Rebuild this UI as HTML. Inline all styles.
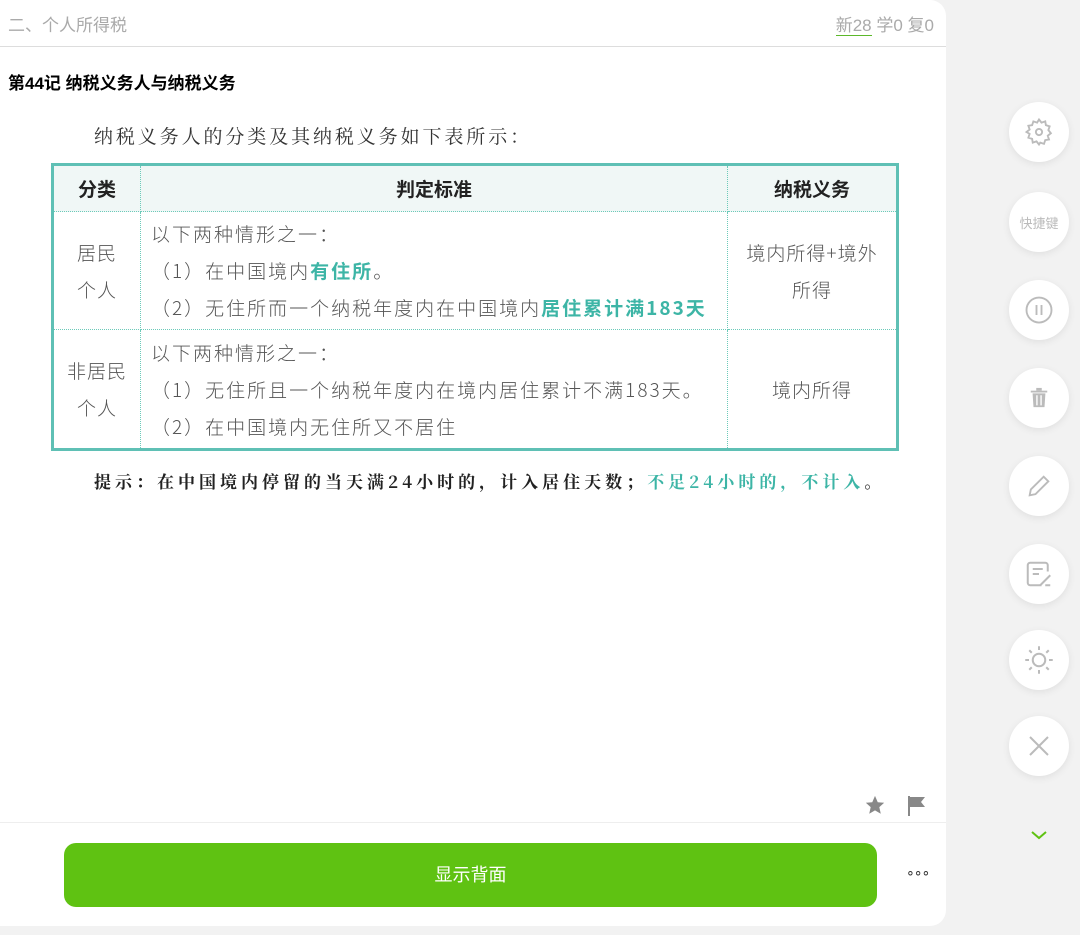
<!DOCTYPE html>
<html><head><meta charset="utf-8"><style>
body{margin:0;width:1080px;height:935px;background:#f2f2f2;font-family:"Liberation Sans","Noto Sans CJK SC",sans-serif;position:relative;overflow:hidden}
.card{position:absolute;left:0;top:0;width:946px;height:926px;background:#fff;border-radius:0 16px 16px 0}
.hdr{position:absolute;left:0;top:0;width:946px;height:46px;border-bottom:1px solid #ddd}
.hdr .l{position:absolute;left:8px;top:11px;font-size:17px;color:#aaa}
.hdr .r{position:absolute;right:12px;top:11px;font-size:17px;color:#aaa}
.hdr .r u{text-decoration:none;border-bottom:1px solid #5cb82a}
.title{position:absolute;left:8px;top:69px;font-size:17px;font-weight:bold;color:#000}
.intro{position:absolute;left:94px;top:122px;font-family:"Noto Serif CJK SC",serif;font-size:19px;color:#333;letter-spacing:2.9px}
table{position:absolute;left:51px;top:163px;width:848px;height:288px;border-collapse:collapse;border:3px solid #5fc0b5;font-family:"Noto Sans CJK SC",sans-serif;color:#555;font-size:19px;font-weight:300}
td{border:1px dotted #6ccab9;padding:0}
.th td{background:#f0f7f6;font-weight:bold;text-align:center;height:45px;color:#222}
.c1{width:86px;text-align:center;line-height:37px;letter-spacing:1px}
.c3{width:168px;text-align:center;line-height:37px;letter-spacing:1px}
.c2 div{line-height:37px;padding-left:10px;letter-spacing:2px}
.g{color:#3db5a6;font-weight:bold}
.tip{position:absolute;left:94px;top:468px;font-family:"Noto Serif CJK SC",serif;font-size:17px;color:#222;font-weight:bold;letter-spacing:4px}
.sep{position:absolute;left:0;top:822px;width:946px;border-top:1px solid #eee}
.btn{position:absolute;left:64px;top:843px;width:813px;height:64px;background:#5fc212;border-radius:12px;color:#fff;font-size:18px;text-align:center;line-height:64px}
.side{position:absolute;left:1009px;width:60px;height:60px;border-radius:50%;background:#fff;box-shadow:0 2px 8px rgba(0,0,0,.08);display:flex;align-items:center;justify-content:center}
</style></head><body>
<div class="card">
<div class="hdr"><span class="l">二、个人所得税</span><span class="r"><u>新28</u> 学0 复0</span></div>
<div class="title">第44记 纳税义务人与纳税义务</div>
<div class="intro">纳税义务人的分类及其纳税义务如下表所示：</div>
<table>
<tr class="th"><td>分类</td><td>判定标准</td><td>纳税义务</td></tr>
<tr><td class="c1">居民<br>个人</td><td class="c2"><div>以下两种情形之一：</div><div>（1）在中国境内<span class="g">有住所</span>。</div><div>（2）无住所而一个纳税年度内在中国境内<span class="g">居住累计满183天</span></div></td><td class="c3">境内所得+境外<br>所得</td></tr>
<tr><td class="c1">非居民<br>个人</td><td class="c2"><div>以下两种情形之一：</div><div>（1）无住所且一个纳税年度内在境内居住累计不满183天。</div><div>（2）在中国境内无住所又不居住</div></td><td class="c3">境内所得</td></tr>
</table>
<div class="tip">提示：在中国境内停留的当天满24小时的，计入居住天数；<span style="color:#3db5a6">不足24小时的，不计入</span>。</div>
<svg style="position:absolute;left:864px;top:794px" width="22" height="22" viewBox="0 0 24 24"><path d="M12 2l3 7 7 .6-5.3 4.7 1.6 7.2L12 17.8 5.7 21.5l1.6-7.2L2 9.6 9 9z" fill="#888"/></svg>
<svg style="position:absolute;left:907px;top:795px" width="20" height="22" viewBox="0 0 20 22"><path d="M2 1v20" stroke="#888" stroke-width="2"/><path d="M3 2h15l-4 5 4 5H3z" fill="#888"/></svg>
<div class="sep"></div>
<div class="btn">显示背面</div>
<div style="position:absolute;left:906px;top:864px;font-size:14px;color:#333;letter-spacing:-1px">∘∘∘</div>
</div>
<div class="side" style="top:102px"><svg width="30" height="30" viewBox="0 0 24 24" fill="none" stroke="#bbb" stroke-width="1.5"><path d="M12 2l2 2.5 3-1 .5 3 3 1-1 3 2 2.5-2.5 2 1 3-3 .5-1 3-3-1L12 22l-2-2.5-3 1-.5-3-3-1 1-3L2 12l2.5-2-1-3 3-.5 1-3 3 1z"/><circle cx="12" cy="12" r="2.5"/></svg></div>
<div class="side" style="top:192px;font-size:13px;color:#bbb">快捷键</div>
<div class="side" style="top:280px"><svg width="30" height="30" viewBox="0 0 24 24" fill="none" stroke="#bbb" stroke-width="1.5"><circle cx="12" cy="12" r="10"/><path d="M10 8v8M14 8v8"/></svg></div>
<div class="side" style="top:368px"><svg width="22" height="22" viewBox="0 0 24 24" fill="#bbb"><rect x="3" y="4" width="18" height="2"/><rect x="9" y="1" width="6" height="3"/><path d="M5 7h14l-1 15H6zM9 9v11h1.5V9zm4.5 0v11H15V9z" fill-rule="evenodd"/></svg></div>
<div class="side" style="top:456px"><svg width="28" height="28" viewBox="0 0 24 24" fill="none" stroke="#bbb" stroke-width="1.6"><path d="M4 20l1-5L16 4l4 4L9 19z"/></svg></div>
<div class="side" style="top:544px"><svg width="30" height="30" viewBox="0 0 24 24" fill="none" stroke="#bbb" stroke-width="1.6"><path d="M14 21H5a2 2 0 01-2-2V5a2 2 0 012-2h12a2 2 0 012 2v5"/><path d="M7 8h8M7 12h5M13 21l8-8M17 21h4"/></svg></div>
<div class="side" style="top:630px"><svg width="30" height="30" viewBox="0 0 24 24" fill="none" stroke="#bbb" stroke-width="1.6"><circle cx="12" cy="12" r="5"/><path d="M12 1v3M12 20v3M1 12h3M20 12h3M4.2 4.2l2 2M17.8 17.8l2 2M4.2 19.8l2-2M17.8 6.2l2-2"/></svg></div>
<div class="side" style="top:716px"><svg width="24" height="24" viewBox="0 0 24 24" stroke="#bbb" stroke-width="2"><path d="M3 3l18 18M21 3L3 21"/></svg></div>
<svg style="position:absolute;left:1030px;top:830px" width="18" height="10" viewBox="0 0 18 10" fill="none" stroke="#5fc212" stroke-width="2"><path d="M2 2l7 6 7-6"/></svg>
</body></html>
